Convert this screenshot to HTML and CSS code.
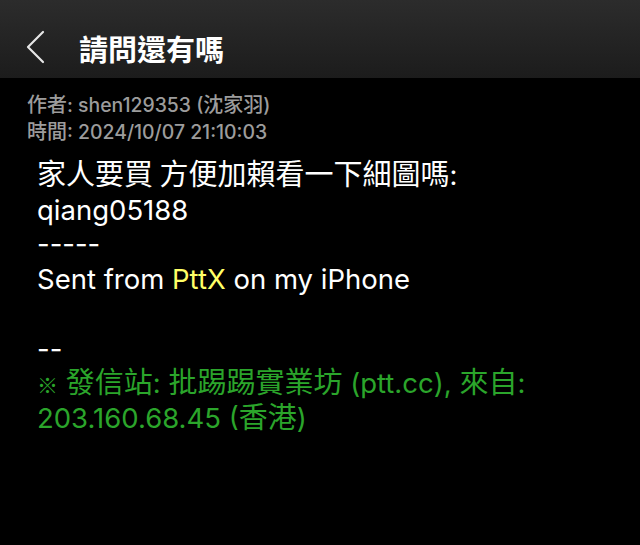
FILE: index.html
```html
<!DOCTYPE html>
<html lang="zh-Hant">
<head>
<meta charset="utf-8">
<link rel="stylesheet" href="styles.css">
</head>
<body>
<header class="navbar">
  <svg class="back" width="20" height="34" viewBox="0 0 20 34"><path d="M17 2 L2 17 L17 32" fill="none" stroke="#e6e6e6" stroke-width="2.2" stroke-linecap="round" stroke-linejoin="round"/></svg>
  <h1 class="title">請問還有嗎</h1>
</header>
<section class="meta">
  <div><span class="cjk">作者</span>: shen129353 (<span class="cjk">沈家羽</span>)</div>
  <div><span class="cjk">時間</span>: 2024/10/07 21:10:03</div>
</section>
<article class="content">
  <div><span class="cjk">家人要買 方便加賴看一下細圖嗎</span>:</div>
  <div>qiang05188</div>
  <div>-----</div>
  <div>Sent from <span class="yellow">PttX</span> on my iPhone</div>
  <div class="blank">&nbsp;</div>
  <div>--</div>
  <div class="green"><span class="cjk mark">※</span> <span class="cjk">發信站</span>: <span class="cjk">批踢踢實業坊</span> (ptt.cc), <span class="cjk">來自</span>:<br>203.160.68.45 (<span class="cjk">香港</span>)</div>
</article>
</body>
</html>
```
FILE: styles.css
```css
html, body {
  margin: 0;
  padding: 0;
  background: #000;
}
body {
  width: 640px;
  height: 545px;
  overflow: hidden;
  font-family: "Inter", "Noto Sans CJK TC", sans-serif;
  color: #fff;
}
.navbar {
  height: 78px;
  background: linear-gradient(#2c2c2c, #1c1c1c);
  display: flex;
  align-items: center;
  padding: 18px 0 0 26px;
  box-sizing: border-box;
}
.back {
  display: block;
  margin-top: -2px;
}
.title {
  margin: 0 0 0 33px;
  font-size: 29px;
  font-weight: 700;
  color: #fff;
  line-height: 1;
  font-family: "Noto Sans CJK TC", sans-serif;
}
.cjk {
  font-family: "Noto Sans CJK TC", sans-serif;
  line-height: 1;
}
.meta {
  padding: 14px 0 0 27px;
  font-size: 19.4px;
  line-height: 27px;
  color: #9c9c9c;
  font-weight: 500;
}
.meta .cjk {
  font-size: 20px;
}
.content {
  padding: 12px 20px 0 37px;
  font-size: 27.5px;
  line-height: 34.7px;
  color: #fff;
}
.content .cjk {
  font-size: 29px;
}
.content .mark {
  font-size: 21px;
}
.yellow { color: #ffff66; }
.green { color: #2ba52b; }
```
